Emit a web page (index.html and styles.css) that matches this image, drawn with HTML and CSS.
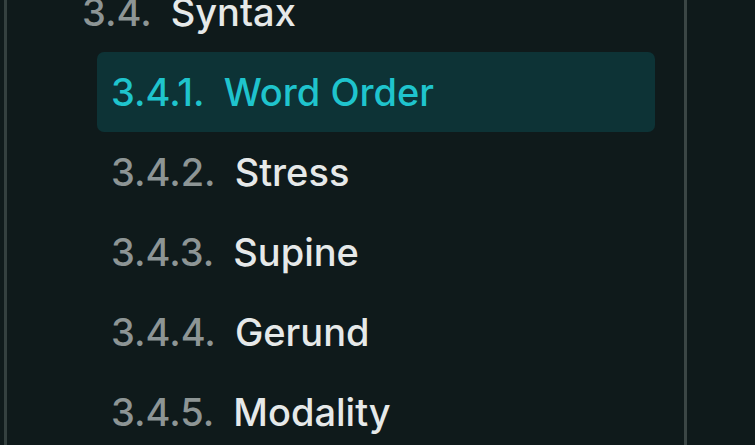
FILE: index.html
```html
<!DOCTYPE html>
<html lang="en">
<head>
<meta charset="utf-8">
<title>Syntax</title>
<link rel="stylesheet" href="styles.css">
</head>
<body>
<div class="frame">
  <nav class="sidebar">
    <ol class="chapter">
      <li class="item">
        <a class="row"><strong class="num">3.4.</strong><span class="label">Syntax</span></a>
        <ol class="section">
          <li class="item"><a class="row active"><strong class="num">3.4.1.</strong><span class="label">Word Order</span></a></li>
          <li class="item"><a class="row"><strong class="num">3.4.2.</strong><span class="label">Stress</span></a></li>
          <li class="item"><a class="row"><strong class="num">3.4.3.</strong><span class="label">Supine</span></a></li>
          <li class="item"><a class="row"><strong class="num">3.4.4.</strong><span class="label">Gerund</span></a></li>
          <li class="item"><a class="row"><strong class="num">3.4.5.</strong><span class="label">Modality</span></a></li>
        </ol>
      </li>
    </ol>
  </nav>
  <div class="content"></div>
</div>
</body>
</html>
```

FILE: styles.css
```css
html, body {
  margin: 0;
  padding: 0;
  background: #0f1a1b;
  height: 100%;
  overflow: hidden;
}
body {
  font-family: Inter, "Noto Sans", sans-serif;
}
.frame {
  display: flex;
  height: 445px;
  padding-left: 4px;
}
.sidebar {
  width: 677px;
  flex: none;
  border-left: 3px solid #34403f;
  border-right: 3px solid #3b4645;
  overflow: hidden;
}
.content {
  flex: 1;
}
ol {
  list-style: none;
  margin: 0;
  padding: 0;
}
.chapter {
  margin-top: -28px;
  margin-left: 61px;
}
.section {
  margin-left: 29px;
  margin-right: 29px;
}
.row {
  display: flex;
  align-items: center;
  height: 80px;
  padding: 0 14px;
  border-radius: 7px;
  font-size: 38px;
  font-weight: 500;
  color: #e6e9e9;
  white-space: nowrap;
}
.num {
  font-weight: 500;
  color: #8d9595;
  margin-right: 19px;
}
.active {
  background: #0d3336;
  color: #1fc4cd;
}
.active .num {
  color: #1fc4cd;
}
```
